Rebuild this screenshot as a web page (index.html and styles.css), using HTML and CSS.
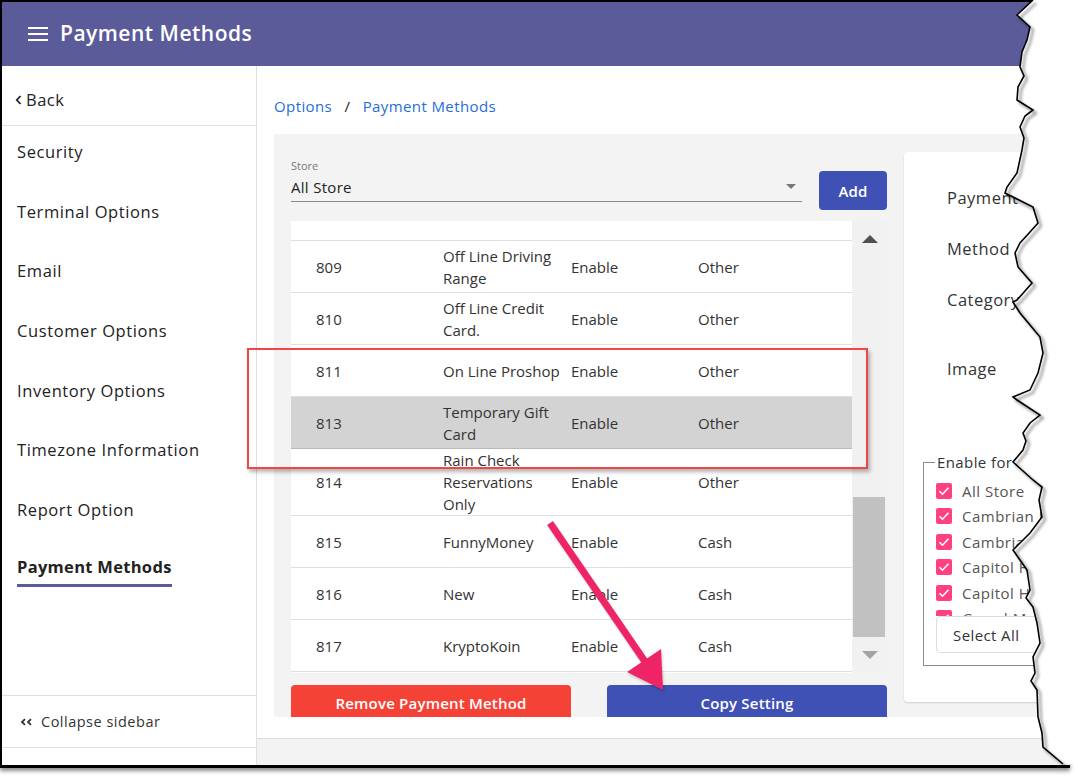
FILE: index.html
```html
<!DOCTYPE html>
<html lang="en">
<head>
    <meta charset="UTF-8">
    <meta name="viewport" content="width=device-width, initial-scale=1.0">
    <title>Payment Methods</title>
    <link rel="stylesheet" href="styles.css">
</head>
<body>
    <div class="shot">
        <header class="topbar">
            <svg class="menu-icon" width="20" height="14" viewBox="0 0 20 14">
                <path d="M0 1h20M0 7h20M0 13h20" stroke="#fff" stroke-width="2"/>
            </svg>
            <h1>Payment Methods</h1>
        </header>

        <div class="layout">
            <aside class="sidebar">
                <div class="back">
                    <svg width="7" height="10" viewBox="0 0 7 10"><path d="M5.5 1L1.8 5l3.7 4" fill="none" stroke="#222" stroke-width="1.8"/></svg>
                    <span>Back</span>
                </div>
                <nav class="nav">
                    <div class="nav-item">Security</div>
                    <div class="nav-item">Terminal Options</div>
                    <div class="nav-item">Email</div>
                    <div class="nav-item">Customer Options</div>
                    <div class="nav-item">Inventory Options</div>
                    <div class="nav-item">Timezone Information</div>
                    <div class="nav-item">Report Option</div>
                    <div class="nav-item active"><span>Payment Methods</span></div>
                </nav>
                <div class="collapse">
                    <svg width="13" height="8" viewBox="0 0 13 8"><path d="M5 1.2L2 4l3 2.8M11 1.2L8 4l3 2.8" fill="none" stroke="#333" stroke-width="1.8"/></svg>
                    <span>Collapse sidebar</span>
                </div>
            </aside>

            <main class="main">
                <div class="crumbs">
                    <span class="crumb-link">Options</span>
                    <span class="crumb-sep">/</span>
                    <span class="crumb-link">Payment Methods</span>
                </div>

                <section class="panel">
                    <div class="list-col">
                        <div class="store-row">
                            <div class="select">
                                <div class="select-label">Store</div>
                                <div class="select-value">All Store</div>
                                <span class="select-caret"></span>
                            </div>
                            <button class="btn btn-add">Add</button>
                        </div>

                        <div class="table-box">
                            <div class="rows">
                                <div class="row row-cut"></div>
                                <div class="row"><div class="c-id">809</div><div class="c-name">Off Line Driving Range</div><div class="c-status">Enable</div><div class="c-type">Other</div></div>
                                <div class="row"><div class="c-id">810</div><div class="c-name">Off Line Credit Card.</div><div class="c-status">Enable</div><div class="c-type">Other</div></div>
                                <div class="row"><div class="c-id">811</div><div class="c-name">On Line Proshop</div><div class="c-status">Enable</div><div class="c-type">Other</div></div>
                                <div class="row selected"><div class="c-id">813</div><div class="c-name">Temporary Gift Card</div><div class="c-status">Enable</div><div class="c-type">Other</div></div>
                                <div class="row row-tall"><div class="c-id">814</div><div class="c-name">Rain Check Reservations Only</div><div class="c-status">Enable</div><div class="c-type">Other</div></div>
                                <div class="row"><div class="c-id">815</div><div class="c-name">FunnyMoney</div><div class="c-status">Enable</div><div class="c-type">Cash</div></div>
                                <div class="row"><div class="c-id">816</div><div class="c-name">New</div><div class="c-status">Enable</div><div class="c-type">Cash</div></div>
                                <div class="row"><div class="c-id">817</div><div class="c-name">KryptoKoin</div><div class="c-status">Enable</div><div class="c-type">Cash</div></div>
                            </div>
                            <div class="scrollbar">
                                <span class="arrow-up"></span>
                                <div class="track"><div class="thumb"></div></div>
                                <span class="arrow-down"></span>
                            </div>
                        </div>

                        <div class="actions">
                            <button class="btn btn-remove">Remove Payment Method</button>
                            <button class="btn btn-copy">Copy Setting</button>
                        </div>
                    </div>

                    <div class="detail-card">
                        <div class="field-label">Payment</div>
                        <div class="field-label">Method</div>
                        <div class="field-label tall">Category</div>
                        <div class="field-label image">Image</div>

                        <fieldset class="stores">
                            <legend>Enable for</legend>
                            <div class="store-list">
                                <label class="check"><span class="box"></span>All Store</label>
                                <label class="check"><span class="box"></span>Cambrian Park</label>
                                <label class="check"><span class="box"></span>Cambrian</label>
                                <label class="check"><span class="box"></span>Capitol Hill</label>
                                <label class="check"><span class="box"></span>Capitol Heights</label>
                                <label class="check"><span class="box"></span>Grand Mesa</label>
                            </div>
                            <button class="btn-select">Select All</button>
                        </fieldset>
                    </div>
                </section>

                <div class="main-gap"></div>
                <div class="main-foot"></div>
            </main>
        </div>

        <!-- annotations drawn on top of the screenshot -->
        <div class="callout"></div>
        <svg class="pointer" width="1078" height="779" viewBox="0 0 1078 779">
            <line x1="550" y1="523" x2="648" y2="666" stroke="#ef2466" stroke-width="7"/>
            <polygon points="663,690 627,672 661,649" fill="#ef2466"/>
        </svg>
    </div>

    <svg class="torn" width="100" height="779" viewBox="990 0 100 779">
        <polygon class="torn-fill" points="1033,0 1017,15 1030,27 1027,40 1022,52 1020,67 1024,76 1018,87 1017,100 1033,110 1025,116 1020,127 1024,138 1022,150 1017,173 1007,187 1005,193 1033,207 1038,223 1030,232 1020,243 1015,253 1018,267 1032,283 1017,300 1013,302 1020,313 1030,325 1040,337 1043,353 1038,373 1030,390 1013,397 1017,400 1040,415 1030,423 1023,433 1026,441 1023,450 1013,462 1033,480 1042,487 1039,500 1042,517 1030,533 1013,550 1027,570 1030,590 1026,598 1033,607 1037,623 1040,643 1033,657 1035,673 1031,681 1037,690 1038,717 1042,733 1043,747 1063,764 1090,764 1090,0"/>
        <polyline class="torn-edge" points="1033,0 1017,15 1030,27 1027,40 1022,52 1020,67 1024,76 1018,87 1017,100 1033,110 1025,116 1020,127 1024,138 1022,150 1017,173 1007,187 1005,193 1033,207 1038,223 1030,232 1020,243 1015,253 1018,267 1032,283 1017,300 1013,302 1020,313 1030,325 1040,337 1043,353 1038,373 1030,390 1013,397 1017,400 1040,415 1030,423 1023,433 1026,441 1023,450 1013,462 1033,480 1042,487 1039,500 1042,517 1030,533 1013,550 1027,570 1030,590 1026,598 1033,607 1037,623 1040,643 1033,657 1035,673 1031,681 1037,690 1038,717 1042,733 1043,747 1063,764"/>
    </svg>
</body>
</html>
```

FILE: styles.css
```css
* {
    box-sizing: border-box;
}
body {
    margin: 0;
    background: #fff;
    font-family: 'Open Sans', sans-serif;
    color: #222;
    position: relative;
    width: 1078px;
    height: 779px;
    overflow: hidden;
}
.shot {
    position: relative;
    width: 1070px;
    height: 768px;
    border: 2px solid #000;
    border-right: none;
    border-bottom-width: 3px;
    box-shadow: 0 3px 4px rgba(0,0,0,0.45);
    overflow: hidden;
}

/* top bar */
.topbar {
    height: 64px;
    background: #5b5b9a;
    display: flex;
    align-items: center;
    padding-left: 26px;
    gap: 12px;
}
.topbar h1 {
    margin: 0 0 3px;
    color: #fff;
    font-size: 21px;
    font-weight: 600;
    letter-spacing: 0.5px;
}

.layout {
    display: flex;
    height: 699px;
}

/* sidebar */
.sidebar {
    width: 255px;
    flex-shrink: 0;
    border-right: 1px solid #e0e0e0;
    display: flex;
    flex-direction: column;
}
.back {
    height: 60px;
    border-bottom: 1px solid #e0e0e0;
    display: flex;
    align-items: center;
    gap: 4px;
    padding: 8px 0 0 13px;
    font-size: 16.5px;
    letter-spacing: 0.5px;
}
.nav-item {
    height: 59.7px;
    padding: 14px 0 0 15px;
    font-size: 16.5px;
    line-height: 24px;
    letter-spacing: 0.6px;
    color: #222;
    white-space: nowrap;
}
.nav-item.active {
    padding-top: 11px;
}
.nav-item.active span {
    display: inline-block;
    font-weight: 700;
    letter-spacing: 0.3px;
    padding-bottom: 7px;
    border-bottom: 3px solid #5b5b9a;
    line-height: 20px;
}
.collapse {
    margin-top: auto;
    height: 53px;
    border-top: 1px solid #e0e0e0;
    border-bottom: 1px solid #e0e0e0;
    margin-bottom: 17px;
    display: flex;
    align-items: center;
    gap: 8px;
    padding-left: 18px;
    font-size: 14.5px;
    letter-spacing: 0.5px;
    color: #333;
}

/* main */
.main {
    flex: 1;
    min-width: 0;
    display: flex;
    flex-direction: column;
}
.crumbs {
    padding: 30px 0 0 17px;
    height: 68px;
    font-size: 15px;
    line-height: 20px;
    letter-spacing: 0.4px;
}
.crumb-link {
    color: #1e6fd9;
}
.crumb-sep {
    color: #222;
    margin: 0 8px;
}

.panel {
    height: 583px;
    margin-left: 17px;
    background: #f3f3f3;
    display: flex;
    gap: 17px;
    padding: 18px 0 0 17px;
    overflow: hidden;
}
.list-col {
    width: 596px;
    flex-shrink: 0;
    padding-top: 6px;
}
.store-row {
    display: flex;
    gap: 17px;
    height: 52px;
}
.select {
    flex: 1;
    position: relative;
    padding-top: 1px;
    border-bottom: 1px solid #8a8a8a;
    height: 44px;
}
.select-label {
    font-size: 11px;
    line-height: 14px;
    color: #777;
}
.select-value {
    margin-top: 3px;
    font-size: 15px;
    line-height: 22px;
    letter-spacing: 0.3px;
    color: #222;
}
.select-caret {
    position: absolute;
    right: 6px;
    top: 26px;
    border-left: 5px solid transparent;
    border-right: 5px solid transparent;
    border-top: 5px solid #777;
}
.btn {
    border: none;
    border-radius: 4px;
    color: #fff;
    font-family: inherit;
    font-weight: 600;
    font-size: 15px;
    letter-spacing: 0.2px;
}
.btn-add {
    width: 68px;
    height: 39px;
    margin-top: 13px;
    background: #3f51b5;
}

.table-box {
    margin-top: 11px;
    height: 452px;
    display: flex;
    background: #fff;
}
.rows {
    width: 561px;
    overflow: hidden;
}
.row {
    height: 52px;
    display: flex;
    align-items: center;
    border-bottom: 1px solid #e0e0e0;
    font-size: 15px;
    line-height: 22px;
    color: #333;
}
.row-cut {
    height: 20px;
}
.row-tall {
    height: 67px;
}
.row.selected {
    background: #d3d3d3;
    border-bottom-color: #b8b8b8;
}
.c-id {
    width: 152px;
    padding-left: 25px;
}
.c-name {
    width: 128px;
    padding-right: 8px;
}
.c-status {
    width: 127px;
}
.scrollbar {
    width: 35px;
    background: #f1f1f1;
    display: flex;
    flex-direction: column;
    align-items: center;
}
.arrow-up {
    margin-top: 14px;
    border-left: 8px solid transparent;
    border-right: 8px solid transparent;
    border-bottom: 8px solid #505050;
}
.track {
    flex: 1;
    width: 100%;
    padding: 254px 2px 0 1px;
}
.thumb {
    height: 140px;
    background: #c1c1c1;
}
.arrow-down {
    margin-bottom: 14px;
    margin-top: 11px;
    border-left: 8px solid transparent;
    border-right: 8px solid transparent;
    border-top: 8px solid #a3a3a3;
}

.actions {
    margin-top: 12px;
    display: flex;
    gap: 36px;
}
.actions .btn {
    width: 280px;
    height: 36px;
}
.btn-remove {
    background: #f44336;
}
.btn-copy {
    background: #3f51b5;
}

/* detail card */
.detail-card {
    width: 300px;
    height: 550px;
    flex-shrink: 0;
    background: #fff;
    border-radius: 4px;
    box-shadow: 0 1px 2px rgba(0,0,0,0.15);
    padding: 34px 0 0 43px;
}
.field-label {
    height: 51px;
    font-size: 16.5px;
    line-height: 24px;
    letter-spacing: 0.5px;
    color: #333;
}
.field-label.tall {
    height: 69px;
}
.field-label.image {
    height: 95px;
}
.stores {
    margin: 0 0 0 -24px;
    width: 240px;
    height: 214px;
    border: 1px solid #8a8a8a;
    padding: 6px 0 0 12px;
}
.stores legend {
    font-size: 15px;
    line-height: 20px;
    padding: 0 2px;
    margin-left: -1px;
    letter-spacing: 0.4px;
    color: #333;
}
.store-list {
    height: 138px;
    overflow: hidden;
}
.check {
    display: flex;
    align-items: center;
    gap: 10px;
    height: 25.5px;
    font-size: 15px;
    color: #555;
    letter-spacing: 0.5px;
}
.box {
    width: 16px;
    height: 16px;
    border-radius: 2px;
    background: #ff4081 url("data:image/svg+xml;utf8,<svg xmlns='http://www.w3.org/2000/svg' width='16' height='16'><path d='M3.5 8.2l3 3 6-6.4' fill='none' stroke='white' stroke-width='1.6'/></svg>") no-repeat center;
}
.btn-select {
    width: 140px;
    height: 37px;
    background: #fff;
    border: 1px solid #ddd;
    border-radius: 4px;
    font-family: inherit;
    font-size: 15px;
    font-weight: 500;
    letter-spacing: 0.4px;
    color: #333;
    text-align: left;
    padding-left: 16px;
}

.main-gap {
    height: 21px;
}
.main-foot {
    flex: 1;
    border-top: 1px solid #ddd;
    background: #f3f3f3;
}

/* annotations */
.callout {
    position: absolute;
    left: 245px;
    top: 346px;
    width: 621px;
    height: 121px;
    border: 2px solid #f04646;
    box-shadow: 2px 3px 4px rgba(0,0,0,0.3);
}
.pointer {
    position: absolute;
    left: -2px;
    top: -2px;
    filter: drop-shadow(1px 2px 1px rgba(0,0,0,0.2));
}
.torn {
    position: absolute;
    left: 990px;
    top: 0;
}
.torn-fill {
    fill: #fff;
}
.torn-edge {
    fill: none;
    stroke: #000;
    stroke-width: 1.6;
    filter: drop-shadow(3px 3px 1.5px rgba(0,0,0,0.55));
}
```
